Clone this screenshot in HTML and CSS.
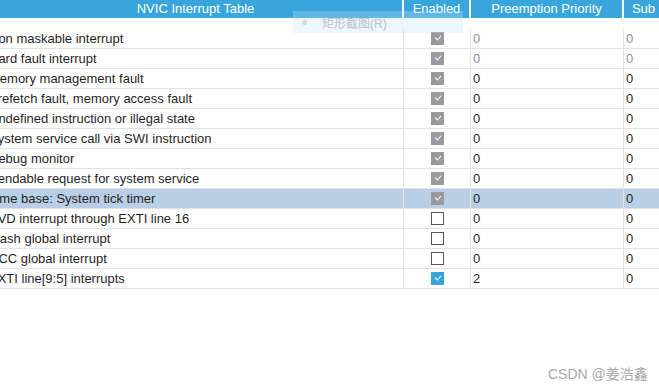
FILE: index.html
```html
<!DOCTYPE html>
<html lang="en">
<head>
    <meta charset="UTF-8">
    <title>NVIC Interrupt Table</title>
    <link rel="stylesheet" href="styles.css">
</head>
<body>
    <div class="viewport">
        <div class="nvic-table">
            <div class="row head">
                <div class="cell name">NVIC Interrupt Table</div>
                <div class="cell enabled">Enabled</div>
                <div class="cell prio">Preemption Priority</div>
                <div class="cell sub">Sub Priority</div>
            </div>
            <div class="spacer"></div>

            <div class="row">
                <div class="cell name">Non maskable interrupt</div>
                <div class="cell enabled"><span class="box locked"></span></div>
                <div class="cell prio dim">0</div>
                <div class="cell sub dim">0</div>
            </div>
            <div class="row">
                <div class="cell name">Hard fault interrupt</div>
                <div class="cell enabled"><span class="box locked"></span></div>
                <div class="cell prio dim">0</div>
                <div class="cell sub dim">0</div>
            </div>
            <div class="row">
                <div class="cell name">Memory management fault</div>
                <div class="cell enabled"><span class="box locked"></span></div>
                <div class="cell prio">0</div>
                <div class="cell sub">0</div>
            </div>
            <div class="row">
                <div class="cell name">Prefetch fault, memory access fault</div>
                <div class="cell enabled"><span class="box locked"></span></div>
                <div class="cell prio">0</div>
                <div class="cell sub">0</div>
            </div>
            <div class="row">
                <div class="cell name">Undefined instruction or illegal state</div>
                <div class="cell enabled"><span class="box locked"></span></div>
                <div class="cell prio">0</div>
                <div class="cell sub">0</div>
            </div>
            <div class="row">
                <div class="cell name">System service call via SWI instruction</div>
                <div class="cell enabled"><span class="box locked"></span></div>
                <div class="cell prio">0</div>
                <div class="cell sub">0</div>
            </div>
            <div class="row">
                <div class="cell name">Debug monitor</div>
                <div class="cell enabled"><span class="box locked"></span></div>
                <div class="cell prio">0</div>
                <div class="cell sub">0</div>
            </div>
            <div class="row">
                <div class="cell name">Pendable request for system service</div>
                <div class="cell enabled"><span class="box locked"></span></div>
                <div class="cell prio">0</div>
                <div class="cell sub">0</div>
            </div>
            <div class="row selected">
                <div class="cell name">Time base: System tick timer</div>
                <div class="cell enabled"><span class="box locked"></span></div>
                <div class="cell prio">0</div>
                <div class="cell sub">0</div>
            </div>
            <div class="row">
                <div class="cell name">PVD interrupt through EXTI line 16</div>
                <div class="cell enabled"><span class="box"></span></div>
                <div class="cell prio">0</div>
                <div class="cell sub">0</div>
            </div>
            <div class="row">
                <div class="cell name">Flash global interrupt</div>
                <div class="cell enabled"><span class="box"></span></div>
                <div class="cell prio">0</div>
                <div class="cell sub">0</div>
            </div>
            <div class="row">
                <div class="cell name">RCC global interrupt</div>
                <div class="cell enabled"><span class="box"></span></div>
                <div class="cell prio">0</div>
                <div class="cell sub">0</div>
            </div>
            <div class="row">
                <div class="cell name">EXTI line[9:5] interrupts</div>
                <div class="cell enabled"><span class="box checked"></span></div>
                <div class="cell prio">2</div>
                <div class="cell sub">0</div>
            </div>
        </div>

        <!-- screenshot tool hint floating over the header -->
        <div class="hint"><span class="dot"></span>矩形截图(R)</div>

        <div class="watermark">CSDN @姜浩鑫</div>
    </div>
</body>
</html>
```

FILE: styles.css
```css
body {
    margin: 0;
    font-family: "Liberation Sans", Arial, "Noto Sans CJK SC", sans-serif;
    font-size: 13px;
    color: #1f1f1f;
    background: #fff;
}
.viewport {
    position: relative;
    width: 659px;
    height: 390px;
    overflow: hidden;
}
.nvic-table {
    margin-left: -11px;
    width: 720px;
}
.row {
    display: grid;
    grid-template-columns: 415px 67px 153px 1fr;
    height: 20px;
    border-bottom: 1px solid #dfe3e8;
    box-sizing: border-box;
}
.cell {
    display: flex;
    align-items: center;
    white-space: nowrap;
    overflow: hidden;
    border-right: 1px solid #dfe3e8;
    padding-left: 2px;
}
.cell.name {
    padding-left: 0;
}
.cell.enabled {
    justify-content: center;
    padding-left: 0;
}
.dim {
    color: #8c93a8;
}
.row.selected {
    background: #b9cfe5;
}

.row.head {
    height: 18px;
    border-bottom: none;
    background: #fff;
}
.row.head .cell {
    background: #38a6dc;
    color: #fff;
    justify-content: center;
    padding-left: 0;
    padding-bottom: 1px;
    border-right: 2px solid #fff;
}
.spacer {
    height: 11px;
}

.box {
    width: 11px;
    height: 11px;
    border: 1px solid #555;
    background: #fff;
    display: inline-block;
    position: relative;
}
.box.locked,
.box.checked {
    border-color: transparent;
}
.box.locked {
    background: #9a9a9c;
}
.box.checked {
    background: #35a5dc;
}
.box.locked::after,
.box.checked::after {
    content: "";
    position: absolute;
    left: 3px;
    top: 2px;
    width: 5px;
    height: 3px;
    border-left: 1.5px solid #fff;
    border-bottom: 1.5px solid #fff;
    transform: rotate(-48deg);
}

.hint {
    position: absolute;
    left: 293px;
    top: 11px;
    width: 170px;
    height: 22px;
    background: rgba(192, 225, 249, 0.3);
    color: #bcc0c5;
    font-size: 12px;
    display: flex;
    align-items: center;
    gap: 15px;
    padding-left: 9px;
    box-sizing: border-box;
}
.hint .dot {
    width: 5px;
    height: 5px;
    border-radius: 50%;
    background: #d6d9dd;
}
.watermark {
    position: absolute;
    left: 548px;
    top: 363px;
    color: #a9a9a9;
    font-size: 14px;
}
```
